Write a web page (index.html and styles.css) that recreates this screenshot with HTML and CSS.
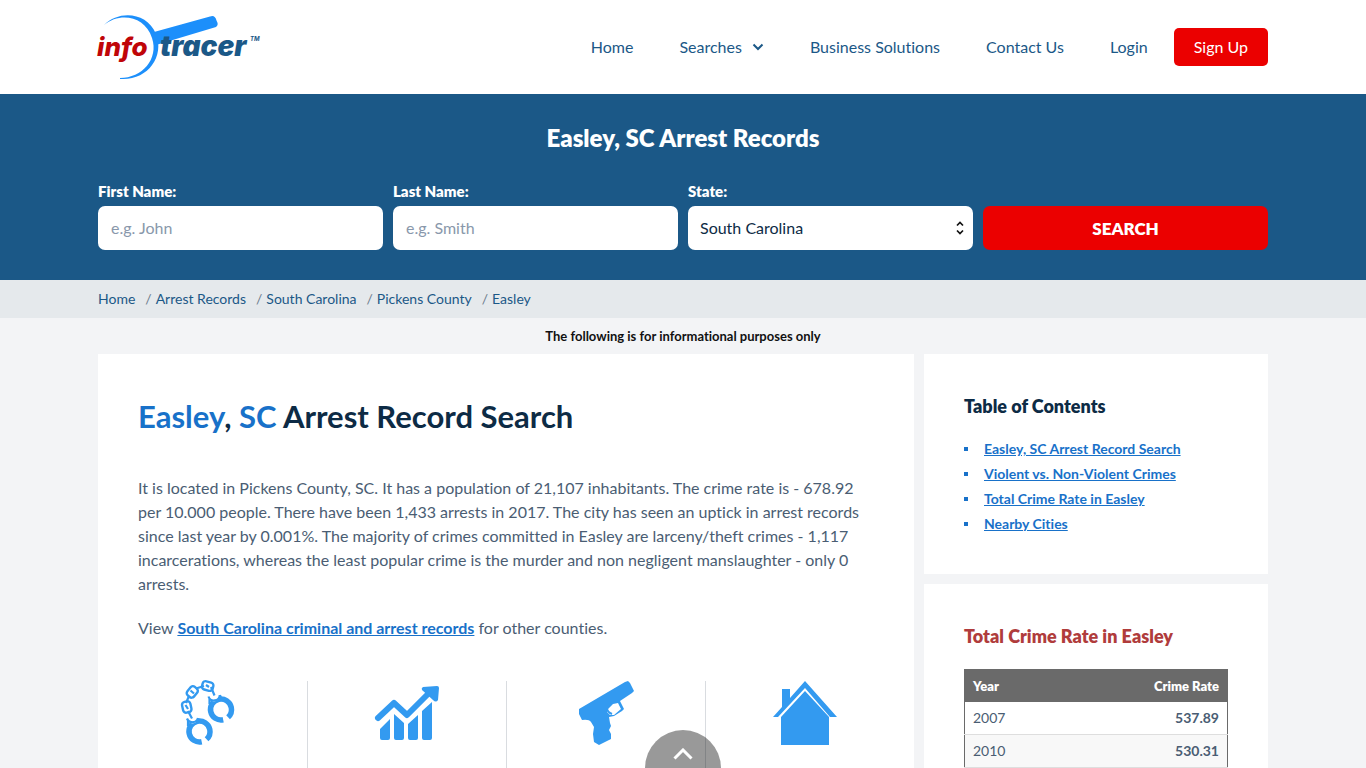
FILE: index.html
```html
<!DOCTYPE html>
<html lang="en">
<head>
<meta charset="utf-8">
<meta name="viewport" content="width=device-width, initial-scale=1">
<title>Easley, SC Arrest Records</title>
<link rel="stylesheet" href="styles.css">
</head>
<body>
<header class="header">
  <div class="container header-row">
    <a class="logo" href="#" aria-label="InfoTracer home">
      <svg width="164" height="68" viewBox="0 0 164 68">
        <path d="M6 12C21 -3 49 -1 58 21C67 44 49 68 22 66L22 65C44 65 61 46 54 25C47 3 22 -1 6 12Z" fill="#1c8ffb"/>
        <path d="M56 19L112 3.500Q117 1.500 118.500 7.500Q121 12 118 14L58 32Z" fill="#1c8ffb"/>
        <text class="logo-info" x="-1" y="43">info</text>
        <text class="logo-tracer" x="62" y="43">tracer</text>
        <text class="logo-tm" x="152" y="28">TM</text>
      </svg>
    </a>
    <nav class="nav">
      <a href="#">Home</a>
      <a class="nav-drop" href="#">Searches
        <svg width="12" height="8" viewBox="0 0 12 8"><path d="M1.500 1.500L6 6L10.500 1.500" fill="none" stroke="#1b5887" stroke-width="2"/></svg>
      </a>
      <a href="#">Business Solutions</a>
      <a href="#">Contact Us</a>
      <a href="#">Login</a>
      <a class="signup" href="#">Sign Up</a>
    </nav>
  </div>
</header>

<section class="hero">
  <div class="container">
    <h1 class="hero-title">Easley, SC Arrest Records</h1>
    <form class="search">
      <div class="field">
        <label for="first">First Name:</label>
        <input id="first" type="text" placeholder="e.g. John">
      </div>
      <div class="field">
        <label for="last">Last Name:</label>
        <input id="last" type="text" placeholder="e.g. Smith">
      </div>
      <div class="field">
        <label for="state">State:</label>
        <div class="select-wrap">
          <select id="state"><option>South Carolina</option></select>
          <svg class="select-icon" width="8" height="14" viewBox="0 0 8 14"><path d="M1 4.500L4 1.500L7 4.500M1 9.500L4 12.500L7 9.500" fill="none" stroke="#111" stroke-width="1.700"/></svg>
        </div>
      </div>
      <button class="search-btn" type="submit">SEARCH</button>
    </form>
  </div>
</section>

<nav class="crumbs" aria-label="Breadcrumb">
  <ol class="container crumb-list">
    <li><a href="#">Home</a></li>
    <li><a href="#">Arrest Records</a></li>
    <li><a href="#">South Carolina</a></li>
    <li><a href="#">Pickens County</a></li>
    <li><a href="#">Easley</a></li>
  </ol>
</nav>

<p class="notice">The following is for informational purposes only</p>

<main class="container layout">
  <article class="card article">
    <h2 class="title"><span>Easley</span>, <span>SC</span> Arrest Record Search</h2>
    <p>It is located in Pickens County, SC. It has a population of 21,107 inhabitants. The crime rate is - 678.92 per 10.000 people. There have been 1,433 arrests in 2017. The city has seen an uptick in arrest records since last year by 0.001%. The majority of crimes committed in Easley are larceny/theft crimes - 1,117 incarcerations, whereas the least popular crime is the murder and non negligent manslaughter - only 0 arrests.</p>
    <p>View <a href="#">South Carolina criminal and arrest records</a> for other counties.</p>
    <div class="stats">
      <div class="stat">
        <svg width="64" height="64" viewBox="0 0 64 64" fill="none" stroke="#339af0">
          <circle cx="23.500" cy="50.500" r="10.500" stroke-width="5.500" stroke-dasharray="60 5.970" transform="rotate(78 23.500 50.500)"/>
          <circle cx="45" cy="28.500" r="10.500" stroke-width="5.500" stroke-dasharray="60 5.970" transform="rotate(78 45 28.500)"/>
          <circle cx="16.500" cy="37.500" r="5" fill="#fff" stroke="none"/>
          <circle cx="38" cy="15.500" r="5" fill="#fff" stroke="none"/>
          <path d="M11 37.500A5.800 5.800 0 0 0 22 37M32.500 15.500A5.800 5.800 0 0 0 43.800 14M12 40V45M22.500 38L25 42M33.500 17V23M44 14L46 20" stroke-width="2.200"/>
          <rect x="6.500" y="20.500" width="8.500" height="11" rx="3" stroke-width="2.400" transform="rotate(-12 10.700 26)"/>
          <rect x="12" y="5.500" width="8.500" height="11" rx="3" stroke-width="2.400" transform="rotate(40 16.300 11)"/>
          <rect x="27.500" y="-0.500" width="8.500" height="11" rx="3" stroke-width="2.400" transform="rotate(105 31.700 5)"/>
          <path d="M12 30L16 37.500M10 22L13 15M9.500 24L12 28M20 7.500L28 5M14.500 9.500L18 12.500M30 4L33 6M35 6L38.500 14.500" stroke-width="2.200"/>
        </svg>
      </div>
      <div class="stat">
        <svg width="64" height="64" viewBox="0 0 64 64" fill="#339af0">
          <path d="M3 37L19 22L32 34L54 12" fill="none" stroke="#339af0" stroke-width="6" stroke-linecap="round" stroke-linejoin="round"/>
          <path d="M48 6L62 5Q64 5 64 7L63 19Q61 22 58 19L47 9Q46 7 48 6Z"/>
          <path d="M5 48L15 38V57Q15 59 13 59H7Q5 59 5 57ZM19 33L29 42V57Q29 59 27 59H21Q19 59 19 57ZM33 43L43 34V57Q43 59 41 59H35Q33 59 33 57ZM47 30L57 21V57Q57 59 55 59H49Q47 59 47 57Z"/>
        </svg>
      </div>
      <div class="stat">
        <svg width="64" height="64" viewBox="0 0 64 64" fill="#339af0">
          <path fill-rule="evenodd" d="M5 28L51 1L54 0L56 2L60 10L58 12L46 20L50 28L48 30L40 35L35 36L36 42L37 45L35 49L37 53L37 58L25 64L20 61L19 53L20 46L17 41Q15 38 8 39L5 33ZM34 28L33 31L36 34L40 34L47 28L44 22L39 23Z"/>
          <path d="M33 27Q33 31 38 33" fill="none" stroke="#339af0" stroke-width="2"/>
        </svg>
      </div>
      <div class="stat">
        <svg width="64" height="64" viewBox="0 0 64 64" fill="#339af0">
          <path d="M0 36L9 26V8H17V17L32 0L64 36H57L32 7L5 36ZM32 10L56 36V64H8V36Z"/>
        </svg>
      </div>
    </div>
  </article>

  <aside class="side">
    <section class="card side-card">
      <h3>Table of Contents</h3>
      <ul class="toc">
        <li><a href="#">Easley, SC Arrest Record Search</a></li>
        <li><a href="#">Violent vs. Non-Violent Crimes</a></li>
        <li><a href="#">Total Crime Rate in Easley</a></li>
        <li><a href="#">Nearby Cities</a></li>
      </ul>
    </section>
    <section class="card side-card">
      <h3 class="red">Total Crime Rate in Easley</h3>
      <table class="rates">
        <thead><tr><th>Year</th><th>Crime Rate</th></tr></thead>
        <tbody>
          <tr><td>2007</td><td>537.89</td></tr>
          <tr><td>2010</td><td>530.31</td></tr>
        </tbody>
      </table>
    </section>
  </aside>
</main>

<button class="to-top" type="button" aria-label="Back to top">
  <svg width="20" height="12" viewBox="0 0 20 12"><path d="M1.500 10.500L10 2L18.500 10.500" fill="none" stroke="#fff" stroke-width="3"/></svg>
</button>
</body>
</html>
```
FILE: styles.css
```css
* { box-sizing: border-box; }
body {
  margin: 0;
  background: #f3f4f6;
  color: #4a5d73;
  font: 16px/24px Lato, "Open Sans", sans-serif;
  font-variant-ligatures: none;
}
h1, h2, h3, p, ul, ol { margin: 0; padding: 0; }
ul, ol { list-style: none; }
a { color: #1b5887; text-decoration: none; }
.container { width: 100%; max-width: 1170px; margin: 0 auto; }

.header { background: #fff; }
.header-row { display: flex; justify-content: space-between; align-items: center; padding: 13px 0; }
.logo svg { display: block; overflow: visible; }
.logo-info, .logo-tracer { font: italic 800 26px Inter, sans-serif; }
.logo-info { fill: #c00508; }
.logo-tracer { fill: #1b5887; font-size: 28px; font-weight: 900; }
.logo-tm { fill: #1b5887; font: italic 700 6px Inter, sans-serif; }
.nav { display: flex; align-items: center; gap: 46px; }
.nav-drop { display: flex; align-items: center; gap: 10px; }
.nav .signup {
  margin-left: -20px;
  padding: 7px 20px;
  border-radius: 5px;
  background: #eb0000;
  color: #fff;
}

.hero { background: #1b5887; padding: 28px 0 30px; }
.hero-title { color: #fff; font-size: 24px; font-weight: 800; line-height: 32px; text-align: center; }
.search { display: grid; grid-template-columns: repeat(4, 1fr); gap: 10px; align-items: end; padding-top: 25px; }
.field label { display: block; color: #fff; font-size: 15px; font-weight: 800; line-height: 20px; padding: 2px 0 5px; }
.field input, .field select {
  display: block;
  width: 100%;
  height: 44px;
  padding: 0 13px 2px;
  border: 0;
  border-radius: 7px;
  background: #fff;
  color: #0d2b45;
  font: 16px Lato, sans-serif;
}
.field select { appearance: none; padding: 0 12px 2px; }
.field input::placeholder { color: #8998ab; opacity: 1; }
.select-wrap { position: relative; }
.select-icon { position: absolute; right: 9px; top: 15px; pointer-events: none; }
.search-btn {
  height: 44px;
  border: 0;
  border-radius: 7px;
  background: #eb0000;
  color: #fff;
  font: 800 17px Lato, sans-serif;
}

.crumbs { background: #e5e9ec; }
.crumb-list { display: flex; padding: 7px 0; font-size: 14px; }
.crumb-list li + li::before { content: "/"; padding: 0 4px 0 10px; color: #6c7c8c; }
.notice { padding: 6px 0; color: #111; font-size: 13px; font-weight: 700; text-align: center; }

.layout { display: grid; grid-template-columns: minmax(0, 1fr) 344px; gap: 10px; align-items: start; }
.card { background: #fff; padding: 40px; }
.title { color: #0d2b45; font-size: 31px; font-weight: 700; line-height: 44px; padding-bottom: 38px; }
.title span { color: #1871c9; }
.article p { margin-bottom: 20px; }
.article p a { color: #1871c9; font-weight: 700; text-decoration: underline; }
.stats { display: grid; grid-template-columns: repeat(4, 1fr); margin: 41px -30px 0; }
.stat { display: flex; justify-content: center; min-height: 140px; border-left: 1px solid #d9dce0; }
.stat:first-child { border-left-color: transparent; }
.stat svg { display: block; overflow: visible; }

.side { display: grid; gap: 10px; }
.side-card { padding-bottom: 38px; }
.side h3 { color: #0d2b45; font-size: 18px; font-weight: 800; line-height: 24px; }
.side h3.red { color: #b03c3c; }
.toc { padding-top: 18px; font-size: 14px; line-height: 25px; }
.toc li { display: flex; align-items: center; gap: 16px; }
.toc li::before { content: ""; width: 4px; height: 4px; background: #1871c9; }
.toc a { color: #1871c9; font-weight: 700; text-decoration: underline; }

.rates { width: 100%; margin-top: 21px; border: 1px solid #6a6a6a; border-collapse: collapse; font-size: 14px; line-height: 16px; }
.rates th { background: #6a6a6a; color: #fff; font-size: 13px; font-weight: 800; }
.rates th, .rates td { padding: 8px; text-align: left; }
.rates td { border-bottom: 1px solid #dedede; }
.rates th:last-child, .rates td:last-child { text-align: right; }
.rates td:last-child { font-weight: 700; }
.rates tbody tr:nth-child(even) { background: #f8f8f8; }

.to-top {
  position: fixed;
  bottom: -38px;
  left: 50%;
  width: 76px;
  height: 76px;
  margin-left: -38px;
  padding: 16px 0 0;
  border: 0;
  border-radius: 50%;
  background: rgba(0, 0, 0, 0.4);
}
.to-top svg { display: block; margin: 0 auto 44px; }
```
